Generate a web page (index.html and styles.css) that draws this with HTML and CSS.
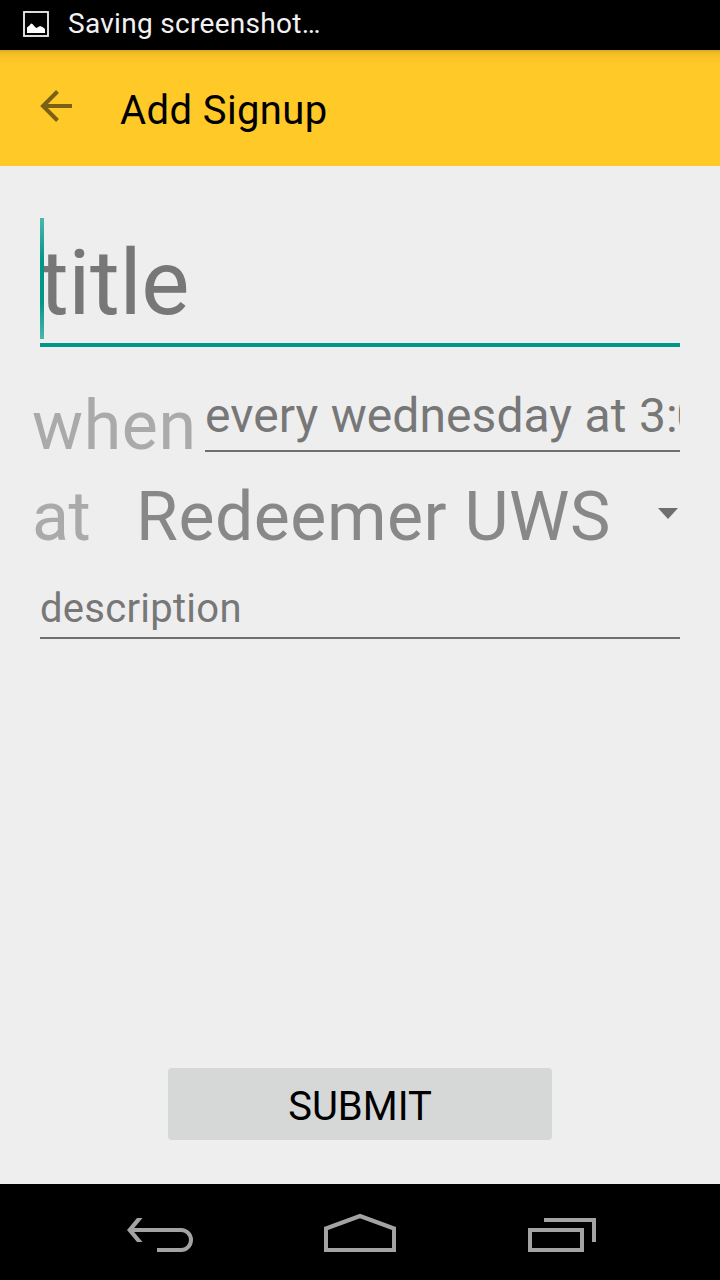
FILE: index.html
```html
<!DOCTYPE html>
<html lang="en">
<head>
<meta charset="utf-8">
<title>Add Signup</title>
<link rel="stylesheet" href="styles.css">
</head>
<body>
<div class="screen">
  <div class="status">
    <svg class="status-icon" width="26" height="26" viewBox="0 0 26 26">
      <rect x="1" y="1" width="24" height="24" fill="none" stroke="#f2f2f2" stroke-width="1.800"/>
      <path d="M4 22V16.500L6.500 14.500L8 12.500L9.500 13L12 16L13.500 17L17 15L19.500 16L22 18V22Z" fill="#fff"/>
    </svg>
    <span class="status-text">Saving screenshot…</span>
  </div>
  <header class="toolbar">
    <svg class="back" width="32" height="32" viewBox="0 0 32 32">
      <path d="M32 16H3M17.500 1.500L3 16L17.500 30.500" fill="none" stroke="#7a6014" stroke-width="4"/>
    </svg>
    <h1 class="heading">Add Signup</h1>
  </header>
  <main class="form">
    <div class="field field-title"><span class="caret"></span><span class="hint">title</span></div>
    <div class="row row-when">
      <span class="label label-when">when</span>
      <div class="field field-when"><span class="hint">every wednesday at 3:<span class="minutes">00</span></span></div>
    </div>
    <div class="row row-at">
      <span class="label label-at">at</span>
      <span class="place">Redeemer UWS</span>
      <svg class="arrow" width="20" height="11" viewBox="0 0 20 11"><path d="M0 0H20L10 11Z" fill="#6e6e6e"/></svg>
    </div>
    <div class="field field-description"><span class="hint">description</span></div>
    <button class="submit">SUBMIT</button>
  </main>
  <nav class="navbar">
    <svg class="nav-icon" width="100" height="70" viewBox="0 0 100 70">
      <path d="M20 30H71A9.800 9.800 0 0 1 71 50H47" fill="none" stroke="#a3a3a3" stroke-width="4"/>
      <path d="M27 18H32.500L22.500 30L32.500 42H27L17 30Z" fill="#a3a3a3"/>
    </svg>
    <svg class="nav-icon" width="100" height="70" viewBox="0 0 100 70">
      <path d="M16 50V28.500L50 16L84 28.500V50Z" fill="none" stroke="#a3a3a3" stroke-width="4"/>
    </svg>
    <svg class="nav-icon" width="100" height="70" viewBox="0 0 100 70">
      <path d="M20 30H72V50H20ZM34 20H84V42" fill="none" stroke="#a3a3a3" stroke-width="4"/>
    </svg>
  </nav>
</div>
</body>
</html>
```
FILE: styles.css
```css
body {
  margin: 0;
  font-family: Roboto, "Noto Sans", sans-serif;
}

.screen {
  display: flex;
  flex-direction: column;
  width: 720px;
  height: 1280px;
  overflow: hidden;
  background: #eee;
}

.status {
  display: flex;
  box-sizing: border-box;
  height: 50px;
  flex: none;
  padding-left: 23px;
  gap: 19px;
  background: #000;
}

.status-icon {
  margin-top: 11px;
}

.status-text {
  font-size: 28px;
  line-height: 47px;
  letter-spacing: 0.3px;
  color: #f2f2f2;
}

.toolbar {
  display: flex;
  flex: none;
  height: 116px;
  padding-left: 40px;
  gap: 48px;
  background: linear-gradient(#d9a822 0, #f0bd26 3px, #fac427 8px, #ffc928 16px);
}

.back {
  margin-top: 40px;
}

.heading {
  margin: 3px 0 0;
  font-size: 40px;
  font-weight: 400;
  line-height: 116px;
  letter-spacing: 0.4px;
  color: #000;
}

.form {
  display: flex;
  flex: 1;
  flex-direction: column;
  padding: 52px 40px 0;
}

.field {
  box-sizing: border-box;
  border-bottom: 2px solid #6e6e6e;
  color: #777;
  white-space: nowrap;
  overflow: hidden;
}

.field-title {
  position: relative;
  height: 129px;
  padding-top: 5px;
  border-bottom: 4px solid #009688;
  font-size: 91px;
  line-height: 121px;
  letter-spacing: -0.4px;
}

.field-title .hint {
  margin-left: -1px;
}

.caret {
  position: absolute;
  left: 0;
  top: 0;
  width: 4px;
  height: 121px;
  background: linear-gradient(#4db6ac, #009688 35%, #009688 70%, #4db6ac);
}

.row {
  display: flex;
  height: 80px;
  margin-left: -8px;
  line-height: 80px;
  font-size: 68px;
}

.row-when {
  margin-top: 39px;
}

.row-at {
  margin-top: 11px;
}

.label {
  flex: none;
  color: #aaa;
}

.label-when {
  width: 173px;
  letter-spacing: 0.6px;
}

.field-when {
  flex: 1;
  height: 66px;
  font-size: 48px;
  line-height: 60px;
  letter-spacing: 0.05px;
  word-spacing: 0.6px;
}

.minutes {
  margin-left: -1.5px;
}

.label-at {
  width: 104px;
  letter-spacing: -0.5px;
}

.place {
  flex: 1;
  letter-spacing: 0.5px;
  color: #888;
}

.arrow {
  margin: 31px 2px 0 0;
}

.field-description {
  height: 59px;
  margin-top: 23px;
  padding-top: 1px;
  font-size: 40px;
  line-height: 56px;
  letter-spacing: 0.27px;
}

.submit {
  align-self: center;
  width: 384px;
  height: 72px;
  margin-top: 429px;
  padding: 3px 0 0;
  border: 0;
  border-radius: 4px;
  background: #d6d8d7;
  font: 400 40px/72px Roboto, "Noto Sans", sans-serif;
  color: #000;
}

.navbar {
  display: flex;
  flex: none;
  box-sizing: border-box;
  height: 96px;
  padding: 16px 0 0 110px;
  gap: 100px;
  background: #000;
}
```
